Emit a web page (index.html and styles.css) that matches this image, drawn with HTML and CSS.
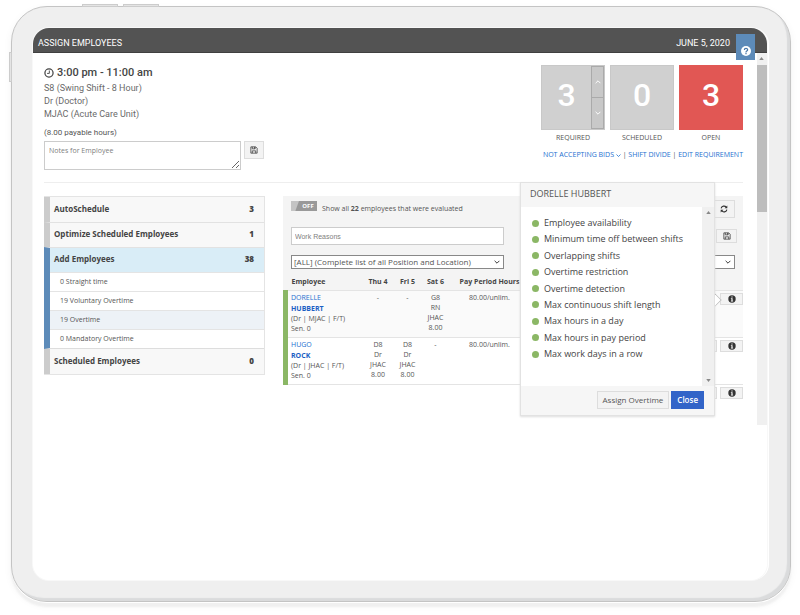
FILE: index.html
```html
<!DOCTYPE html>
<html lang="en">
<head>
<meta charset="utf-8">
<title>Assign Employees</title>
<link rel="stylesheet" href="styles.css">
</head>
<body>
<svg class="sprite" aria-hidden="true">
  <symbol id="save" viewBox="0 0 14 14"><path d="M1.500 1.500h8.500l2.500 2.500v8.500h-11zM4 1.500v3.500h5V1.500M4 12.500v-4h6v4" fill="none" stroke="currentColor" stroke-width="1.300"/><path d="M7 2h1.500v2.500H7z" fill="currentColor"/></symbol>
  <symbol id="info" viewBox="0 0 14 14"><circle cx="7" cy="7" r="6.500" fill="currentColor"/><path d="M6 2.500h2v2H6zM5 5.500h3v4.500h1v1.500H5V10h1V7H5z" fill="#fff"/></symbol>
  <symbol id="down" viewBox="0 0 10 6"><path d="M1 1l4 4 4-4" fill="none" stroke="currentColor" stroke-width="1.600"/></symbol>
  <symbol id="up" viewBox="0 0 10 6"><path d="M1 5l4-4 4 4" fill="none" stroke="currentColor" stroke-width="1.600"/></symbol>
  <symbol id="tri-up" viewBox="0 0 6 4"><path d="M0 4l3-4 3 4z" fill="currentColor"/></symbol>
  <symbol id="tri-down" viewBox="0 0 6 4"><path d="M0 0l3 4 3-4z" fill="currentColor"/></symbol>
</svg>
<div class="tablet">
  <i class="key key-a"></i><i class="key key-b"></i><i class="key key-side"></i>
  <div class="screen">
    <header class="topbar">
      <h1>ASSIGN EMPLOYEES</h1>
      <span class="date">JUNE 5, 2020</span>
      <button class="help" aria-label="Help"><svg viewBox="0 0 14 14"><circle cx="7" cy="7" r="7" fill="#fff"/><path d="M4.700 5.500C4.700 2.600 9.300 2.600 9.300 5.300 9.300 7 7 6.900 7 8.600M7 9.600v1.800" fill="none" stroke="#4c79a8" stroke-width="1.700"/></svg></button>
    </header>
    <div class="viewport">
      <main class="content">
        <section class="summary">
          <div class="shift">
            <h2><svg viewBox="0 0 12 12"><circle cx="6" cy="6" r="4.900" fill="none" stroke="currentColor" stroke-width="1.500"/><path d="M6.400 3v3.500H3.700" fill="none" stroke="currentColor" stroke-width="1.100"/></svg>3:00 pm - 11:00 am</h2>
            <p>S8 (Swing Shift - 8 Hour)</p>
            <p>Dr (Doctor)</p>
            <p>MJAC (Acute Care Unit)</p>
            <p class="payable">(8.00 payable hours)</p>
            <div class="notes">
              <textarea aria-label="Notes for Employee" placeholder="Notes for Employee"></textarea>
              <button class="btn" aria-label="Save notes"><svg><use href="#save"/></svg></button>
            </div>
          </div>
          <div class="stats">
            <div class="tiles">
              <div class="stat"><div class="tile"><span>3</span>
                <div class="stepper"><button aria-label="Increase"><svg><use href="#up"/></svg></button><button aria-label="Decrease"><svg><use href="#down"/></svg></button></div></div>REQUIRED</div>
              <div class="stat"><div class="tile"><span>0</span></div>SCHEDULED</div>
              <div class="stat"><div class="tile open"><span>3</span></div>OPEN</div>
            </div>
            <nav class="links"><a href="#bids">NOT ACCEPTING BIDS <svg><use href="#down"/></svg></a> | <a href="#divide">SHIFT DIVIDE</a> | <a href="#edit">EDIT REQUIREMENT</a></nav>
          </div>
        </section>
        <section class="work">
          <nav class="menu">
            <a class="step" href="#auto">AutoSchedule<b>3</b></a>
            <a class="step" href="#optimize">Optimize Scheduled Employees<b>1</b></a>
            <div class="group">
              <a class="step current" href="#add">Add Employees<b>38</b></a>
              <a class="sub" href="#straight">0 Straight time</a>
              <a class="sub" href="#voluntary">19 Voluntary Overtime</a>
              <a class="sub chosen" href="#overtime">19 Overtime</a>
              <a class="sub" href="#mandatory">0 Mandatory Overtime</a>
            </div>
            <a class="step" href="#scheduled">Scheduled Employees<b>0</b></a>
          </nav>
          <div class="panel">
            <div class="filters">
              <div class="line first">
                <button class="toggle" role="switch" aria-checked="false">OFF</button>
                <span>Show all <b>22</b> employees that were evaluated</span>
                <button class="btn refresh" aria-label="Refresh"><svg viewBox="0 0 14 14"><path d="M2 6a5 5 0 0 1 9-2M12 8a5 5 0 0 1-9 2" fill="none" stroke="currentColor" stroke-width="2"/><path d="M12.800 1v4.700H8zM1.200 13V8.300H6z" fill="currentColor"/></svg></button>
              </div>
              <div class="line">
                <input class="reasons" aria-label="Work Reasons" placeholder="Work Reasons">
                <button class="btn save" aria-label="Save reasons"><svg><use href="#save"/></svg></button>
              </div>
              <div class="line selects">
                <div class="pick"><select aria-label="Position and location"><option>[ALL] (Complete list of all Position and Location)</option></select><svg><use href="#down"/></svg></div>
                <div class="pick"><select aria-label="Sort order"><option></option></select><svg><use href="#down"/></svg></div>
              </div>
            </div>
            <table>
              <colgroup><col class="c-name"><col class="c-thu"><col class="c-day"><col class="c-day"><col class="c-pay"><col></colgroup>
              <thead><tr><th>Employee</th><th>Thu 4</th><th>Fri 5</th><th>Sat 6</th><th>Pay Period Hours</th><th></th></tr></thead>
              <tbody>
                <tr class="tint"><td><a href="#dorelle">DORELLE<b>HUBBERT</b></a>(Dr | MJAC | F/T)<br>Sen. 0</td><td>-</td><td>-</td><td>G8<br>RN<br>JHAC<br>8.00</td><td>80.00/unlim.</td><td><button class="btn info" aria-label="Details for Dorelle Hubbert"><svg><use href="#info"/></svg></button></td></tr>
                <tr><td><a href="#hugo">HUGO<b>ROCK</b></a>(Dr | JHAC | F/T)<br>Sen. 0</td><td>D8<br>Dr<br>JHAC<br>8.00</td><td>D8<br>Dr<br>JHAC<br>8.00</td><td>-</td><td>80.00/unlim.</td><td><button class="btn stub" aria-label="Assign Hugo Rock"></button><button class="btn info" aria-label="Details for Hugo Rock"><svg><use href="#info"/></svg></button></td></tr>
                <tr class="last"><td></td><td></td><td></td><td></td><td></td><td><button class="btn stub" aria-label="Assign"></button><button class="btn info" aria-label="Details"><svg><use href="#info"/></svg></button></td></tr>
              </tbody>
            </table>
            <div class="popover" role="dialog" aria-labelledby="who">
              <h3 id="who">DORELLE HUBBERT</h3>
              <div class="pop-body">
                <ul>
                  <li>Employee availability</li><li>Minimum time off between shifts</li><li>Overlapping shifts</li><li>Overtime restriction</li><li>Overtime detection</li><li>Max continuous shift length</li><li>Max hours in a day</li><li>Max hours in pay period</li><li>Max work days in a row</li>
                </ul>
                <div class="pop-scroll"><svg><use href="#tri-up"/></svg><svg><use href="#tri-down"/></svg></div>
              </div>
              <footer><button class="assign">Assign Overtime</button><button class="close">Close</button></footer>
            </div>
          </div>
        </section>
      </main>
      <div class="scrollbar"><div class="arrow"><svg><use href="#tri-up"/></svg></div><div class="thumb"></div></div>
    </div>
  </div>
</div>
</body>
</html>
```

FILE: styles.css
```css
* { box-sizing: border-box; }
body {
  margin: 0;
  padding: 6px 9px 13px 11px;
  min-height: 100vh;
  display: flex;
  background: #fff;
  color: #555;
  font: 8px/10px "Open Sans", sans-serif;
}
.sprite { position: absolute; width: 0; height: 0; }
h1, h2, h3, p, ul { margin: 0; padding: 0; font-weight: 400; }
a { text-decoration: none; color: inherit; }
button, input, select, textarea { font: inherit; color: inherit; margin: 0; padding: 0; border-radius: 0; }
svg { display: block; }

.tablet {
  position: relative;
  flex: 1;
  display: flex;
  padding: 21px 23px 21px 21px;
  background: #efefef;
  border: 1px solid #c4c4c4;
  border-radius: 36px;
  box-shadow: inset -3px -3px 1px #dadbdc, 0 1px 0 #fff, 0 5px 2px #f0f0f0, 0 3px 7px 2px #f8f8f8;
}
.key { position: absolute; background: #e4e4e4; border: 1px solid #ccc; }
.key-a { left: 70px; top: -3px; width: 36px; height: 3px; }
.key-b { left: 111px; top: -3px; width: 36px; height: 3px; }
.key-side { left: -3px; top: 45px; width: 3px; height: 30px; }
.screen {
  flex: 1;
  min-width: 0;
  background: #fff;
  border-radius: 16px;
  box-shadow: 0 0 0 1px #f8f8f8, 2px 0 0 #fff;
}

.topbar {
  display: flex;
  align-items: center;
  height: 25px;
  padding: 6px 12px 0 5px;
  background: #535353;
  border-bottom: 1px solid #404040;
  border-radius: 16px 16px 0 0;
  color: #fff;
  font: 400 9px/12px Roboto, sans-serif;
}
.topbar h1 { font: inherit; }
.date { margin-left: auto; }
.help {
  align-self: flex-start;
  flex: none;
  width: 19px;
  height: 26px;
  margin-left: 6px;
  border: 0;
  background: #5d8bb9;
}
.help svg { width: 10px; height: 10px; margin: 7px auto 0; }

.viewport { display: flex; }
.content { flex: 1; min-width: 0; padding: 12px 14px 0 11px; }
.scrollbar { width: 10px; height: 372px; background: #f0f0f0; }
.arrow { height: 12px; padding: 4px 2px; color: #888; }
.arrow svg, .pop-scroll svg { width: 5px; height: 3px; }
.thumb { height: 147px; background: #bdbdbd; }

.summary {
  display: flex;
  justify-content: space-between;
  height: 118px;
  border-bottom: 1px solid #eee;
}
.shift { color: #6a6a6a; font: 300 9px/13px Roboto, sans-serif; }
.shift h2 {
  display: flex;
  align-items: center;
  gap: 3px;
  margin-bottom: 1px;
  color: #444;
  font: 500 11px/16px Roboto, sans-serif;
}
.shift h2 svg { width: 10px; height: 10px; }
.shift .payable { margin: 6px 0 2px; color: #555; font: 400 8px/12px Roboto, sans-serif; }
.notes { display: flex; align-items: flex-start; gap: 3px; }
.notes textarea { width: 197px; height: 29px; padding: 4px; border: 1px solid #ccc; outline: 0; resize: both; font: 400 7px/10px "Open Sans", sans-serif; }
::placeholder { color: #808080; opacity: 1; }
.btn {
  display: flex;
  align-items: center;
  justify-content: center;
  flex: none;
  width: 20px;
  height: 18px;
  border: 1px solid #ddd;
  background: #f3f3f3;
  color: #333;
}
.btn svg { width: 8px; height: 8px; }

.tiles { display: flex; justify-content: flex-end; gap: 5px; }
.stat { width: 64px; text-align: center; font: 400 7px/16px "Open Sans", sans-serif; }
.tile {
  display: flex;
  height: 65px;
  background: #d0d0d0;
  border: 1px solid #c8c8c8;
  color: #fff;
  font: 500 32px/58px Roboto, sans-serif;
}
.tile span { flex: 1; }
.open { background: #e15754; border-color: #e15754; }
.stepper { display: flex; flex-direction: column; width: 13px; }
.stepper button { flex: 1; border: 1px solid #aaa; background: #c8c8c8; }
.stepper button + button { border-top: 0; }
.stepper svg { width: 6px; height: 4px; margin: auto; color: #fff; }
.links { margin-top: 4px; text-align: right; font-size: 7px; line-height: 10px; }
.links a { color: #1c70d0; }
.links svg { display: inline-block; width: 5px; height: 3px; vertical-align: middle; }

.work { display: flex; align-items: flex-start; gap: 18px; padding-top: 13px; }
.menu { width: 221px; border: 1px solid #e4e4e4; border-left: 0; font-size: 7px; }
.menu a { display: flex; align-items: center; }
.menu .step {
  justify-content: space-between;
  height: 25px;
  padding: 0 10px 2px 4px;
  background: #f8f8f8;
  border-left: 6px solid #ccc;
  color: #444;
  font-size: 8px;
  font-weight: 700;
}
.step + .step, .group { border-top: 1px solid #e2e2e2; }
.group { border-left: 6px solid #5d8bb9; border-bottom: 1px solid #ddd; }
.menu .current { height: 24px; border-left: 0; background: #d9edf7; }
.sub { height: 19px; padding-left: 10px; border-top: 1px solid #e4e4e4; }
.chosen { background: #edf2f7; }

.panel { position: relative; flex: 1; min-width: 0; background: #f4f4f4; }
.filters { padding: 5px 8px 0 8px; }
.line { display: flex; align-items: center; }
.first { height: 16px; gap: 5px; font-size: 7px; }
.toggle {
  align-self: flex-start;
  width: 26px;
  height: 10px;
  padding-left: 8px;
  border: 0;
  background: linear-gradient(110deg, #c4c4c4 7px, #999 8px);
  color: #fff;
  font: 700 6px/10px "Open Sans", sans-serif;
}
.refresh { width: 22px; margin-left: auto; }
.line + .line { margin-top: 10px; }
.reasons { width: 213px; height: 18px; padding: 0 3px; border: 1px solid #ccc; background: #fff; outline: 0; font: 7px "Liberation Sans", sans-serif; }
.save { width: 21px; height: 14px; margin: 0 -2px 0 auto; }
.selects { gap: 30px; }
.pick { position: relative; width: 213px; height: 14px; }
.pick + .pick { flex: 1; width: auto; }
.pick select { display: block; appearance: none; width: 100%; height: 14px; padding: 0 14px 0 2px; border: 1px solid #888; background: #fff; font-size: 8px; line-height: 12px; }
.pick svg { position: absolute; right: 4px; top: 5px; width: 6px; height: 4px; color: #333; }

table { width: 100%; table-layout: fixed; border-collapse: collapse; font-size: 7px; line-height: 10px; }
.c-name { width: 77px; }
.c-thu { width: 31px; }
.c-day { width: 28px; }
.c-pay { width: 80px; }
th { height: 21px; padding: 6px 0 0; color: #444; font-weight: 700; white-space: nowrap; }
td { height: 47px; padding: 2px 0 3px; vertical-align: top; text-align: center; }
th:first-child { text-align: left; padding-left: 6px; }
td:first-child { text-align: left; padding-left: 3px; white-space: nowrap; }
tbody tr { background: #fff; border-top: 1px solid #e4e4e4; }
tbody tr.tint { background: #fafafa; }
tbody td:first-child { border-left: 5px solid #8bb765; }
tbody .last td { height: 30px; }
tbody .last td:first-child { border-left-color: #fff; }
td a { display: block; color: #1c70d0; }
td b { display: block; color: #1b5fc4; line-height: 11px; }
td .btn { display: inline-flex; width: 23px; height: 12px; vertical-align: top; }
td:last-child { text-align: right; }
td .stub { margin-right: 3px; }

.popover {
  position: absolute;
  left: 237px;
  top: -14px;
  width: 195px;
  background: #fff;
  border: 1px solid #e2e2e2;
  box-shadow: 0 1px 2px #ddd;
}
.popover::after {
  content: "";
  position: absolute;
  left: 189px;
  top: 112px;
  width: 9px;
  height: 9px;
  border: solid #bbb;
  border-width: 1px 1px 0 0;
  background: #fff;
  transform: rotate(45deg);
  clip-path: polygon(0 0, 100% 0, 100% 100%);
}
.popover h3 { height: 24px; padding-left: 9px; background: #f6f6f6; font: 400 9px/22px "Open Sans", sans-serif; }
.pop-body { display: flex; height: 179px; }
.popover ul { flex: 1; display: flex; flex-direction: column; justify-content: space-between; padding: 8px 0 24px 11px; list-style: none; color: #444; font-size: 9px; line-height: 16px; white-space: nowrap; }
.popover li { display: flex; align-items: center; gap: 5px; }
.popover li::before { content: ""; width: 7px; height: 7px; border-radius: 50%; background: #8bb765; }
.pop-scroll { display: flex; flex-direction: column; justify-content: space-between; align-items: center; width: 12px; padding: 4px 0; background: #f0f0f0; color: #888; }
.popover footer { display: flex; justify-content: flex-end; gap: 2px; padding: 5px 10px 6px; background: #f6f6f6; }
.popover footer button { height: 18px; padding: 0 5px; border: 1px solid #ddd; background: #f3f3f3; font-size: 8px; }
.popover footer .close { border-color: #3264c8; background: #3264c8; color: #fff; font-weight: 600; }
```
